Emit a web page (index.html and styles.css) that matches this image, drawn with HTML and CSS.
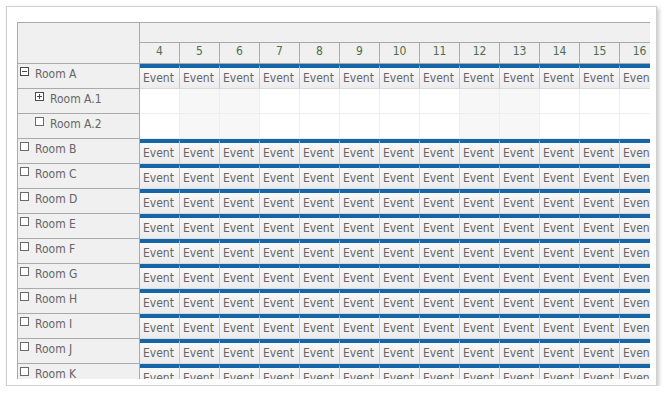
FILE: index.html
```html
<!DOCTYPE html>
<html lang="en">
<head>
    <meta charset="UTF-8">
    <title>Scheduler</title>
    <link rel="stylesheet" href="styles.css">
</head>
<body>
    <div class="frame">
        <div class="scheduler">
            <div class="corner"></div>
            <div class="timeline">
                <div class="time-top"></div>
                <div class="days">
                    <div class="day">4</div><div class="day">5</div><div class="day">6</div><div class="day">7</div><div class="day">8</div><div class="day">9</div><div class="day">10</div><div class="day">11</div><div class="day">12</div><div class="day">13</div><div class="day">14</div><div class="day">15</div><div class="day">16</div>
                </div>
            </div>

            <div class="rowhead"><svg class="tree" width="9" height="9"><rect x="0.5" y="0.5" width="8" height="8"/><path d="M2 4.5h5"/></svg>Room A</div>
            <div class="lane"><div class="event">Event</div><div class="event">Event</div><div class="event">Event</div><div class="event">Event</div><div class="event">Event</div><div class="event">Event</div><div class="event">Event</div><div class="event">Event</div><div class="event">Event</div><div class="event">Event</div><div class="event">Event</div><div class="event">Event</div><div class="event">Event</div></div>

            <div class="rowhead child"><svg class="tree" width="9" height="9"><rect x="0.5" y="0.5" width="8" height="8"/><path d="M2 4.5h5M4.5 2v5"/></svg>Room A.1</div>
            <div class="lane empty"><div class="cell"></div><div class="cell off"></div><div class="cell off"></div><div class="cell"></div><div class="cell"></div><div class="cell"></div><div class="cell"></div><div class="cell"></div><div class="cell off"></div><div class="cell off"></div><div class="cell"></div><div class="cell"></div><div class="cell"></div></div>

            <div class="rowhead child"><svg class="tree leaf" width="9" height="9"><rect x="0.5" y="0.5" width="8" height="8"/></svg>Room A.2</div>
            <div class="lane empty"><div class="cell"></div><div class="cell off"></div><div class="cell off"></div><div class="cell"></div><div class="cell"></div><div class="cell"></div><div class="cell"></div><div class="cell"></div><div class="cell off"></div><div class="cell off"></div><div class="cell"></div><div class="cell"></div><div class="cell"></div></div>

            <div class="rowhead"><svg class="tree leaf" width="9" height="9"><rect x="0.5" y="0.5" width="8" height="8"/></svg>Room B</div>
            <div class="lane"><div class="event">Event</div><div class="event">Event</div><div class="event">Event</div><div class="event">Event</div><div class="event">Event</div><div class="event">Event</div><div class="event">Event</div><div class="event">Event</div><div class="event">Event</div><div class="event">Event</div><div class="event">Event</div><div class="event">Event</div><div class="event">Event</div></div>

            <div class="rowhead"><svg class="tree leaf" width="9" height="9"><rect x="0.5" y="0.5" width="8" height="8"/></svg>Room C</div>
            <div class="lane"><div class="event">Event</div><div class="event">Event</div><div class="event">Event</div><div class="event">Event</div><div class="event">Event</div><div class="event">Event</div><div class="event">Event</div><div class="event">Event</div><div class="event">Event</div><div class="event">Event</div><div class="event">Event</div><div class="event">Event</div><div class="event">Event</div></div>

            <div class="rowhead"><svg class="tree leaf" width="9" height="9"><rect x="0.5" y="0.5" width="8" height="8"/></svg>Room D</div>
            <div class="lane"><div class="event">Event</div><div class="event">Event</div><div class="event">Event</div><div class="event">Event</div><div class="event">Event</div><div class="event">Event</div><div class="event">Event</div><div class="event">Event</div><div class="event">Event</div><div class="event">Event</div><div class="event">Event</div><div class="event">Event</div><div class="event">Event</div></div>

            <div class="rowhead"><svg class="tree leaf" width="9" height="9"><rect x="0.5" y="0.5" width="8" height="8"/></svg>Room E</div>
            <div class="lane"><div class="event">Event</div><div class="event">Event</div><div class="event">Event</div><div class="event">Event</div><div class="event">Event</div><div class="event">Event</div><div class="event">Event</div><div class="event">Event</div><div class="event">Event</div><div class="event">Event</div><div class="event">Event</div><div class="event">Event</div><div class="event">Event</div></div>

            <div class="rowhead"><svg class="tree leaf" width="9" height="9"><rect x="0.5" y="0.5" width="8" height="8"/></svg>Room F</div>
            <div class="lane"><div class="event">Event</div><div class="event">Event</div><div class="event">Event</div><div class="event">Event</div><div class="event">Event</div><div class="event">Event</div><div class="event">Event</div><div class="event">Event</div><div class="event">Event</div><div class="event">Event</div><div class="event">Event</div><div class="event">Event</div><div class="event">Event</div></div>

            <div class="rowhead"><svg class="tree leaf" width="9" height="9"><rect x="0.5" y="0.5" width="8" height="8"/></svg>Room G</div>
            <div class="lane"><div class="event">Event</div><div class="event">Event</div><div class="event">Event</div><div class="event">Event</div><div class="event">Event</div><div class="event">Event</div><div class="event">Event</div><div class="event">Event</div><div class="event">Event</div><div class="event">Event</div><div class="event">Event</div><div class="event">Event</div><div class="event">Event</div></div>

            <div class="rowhead"><svg class="tree leaf" width="9" height="9"><rect x="0.5" y="0.5" width="8" height="8"/></svg>Room H</div>
            <div class="lane"><div class="event">Event</div><div class="event">Event</div><div class="event">Event</div><div class="event">Event</div><div class="event">Event</div><div class="event">Event</div><div class="event">Event</div><div class="event">Event</div><div class="event">Event</div><div class="event">Event</div><div class="event">Event</div><div class="event">Event</div><div class="event">Event</div></div>

            <div class="rowhead"><svg class="tree leaf" width="9" height="9"><rect x="0.5" y="0.5" width="8" height="8"/></svg>Room I</div>
            <div class="lane"><div class="event">Event</div><div class="event">Event</div><div class="event">Event</div><div class="event">Event</div><div class="event">Event</div><div class="event">Event</div><div class="event">Event</div><div class="event">Event</div><div class="event">Event</div><div class="event">Event</div><div class="event">Event</div><div class="event">Event</div><div class="event">Event</div></div>

            <div class="rowhead"><svg class="tree leaf" width="9" height="9"><rect x="0.5" y="0.5" width="8" height="8"/></svg>Room J</div>
            <div class="lane"><div class="event">Event</div><div class="event">Event</div><div class="event">Event</div><div class="event">Event</div><div class="event">Event</div><div class="event">Event</div><div class="event">Event</div><div class="event">Event</div><div class="event">Event</div><div class="event">Event</div><div class="event">Event</div><div class="event">Event</div><div class="event">Event</div></div>

            <div class="rowhead"><svg class="tree leaf" width="9" height="9"><rect x="0.5" y="0.5" width="8" height="8"/></svg>Room K</div>
            <div class="lane"><div class="event">Event</div><div class="event">Event</div><div class="event">Event</div><div class="event">Event</div><div class="event">Event</div><div class="event">Event</div><div class="event">Event</div><div class="event">Event</div><div class="event">Event</div><div class="event">Event</div><div class="event">Event</div><div class="event">Event</div><div class="event">Event</div></div>
        </div>
    </div>
</body>
</html>
```

FILE: styles.css
```css
body {
    margin: 0;
    background: #fff;
    font-family: "DejaVu Sans Condensed", "DejaVu Sans", sans-serif;
    font-size: 12px;
    color: #666;
}
.frame {
    margin: 6px 0 0 6px;
    width: 651px;
    height: 380px;
    box-sizing: border-box;
    padding: 15px 0 0 10px;
    background: #fff;
    border: 1px solid #cfcfcf;
    box-shadow: 2px 2px 4px rgba(0, 0, 0, 0.22);
}
.scheduler {
    display: grid;
    grid-template-columns: 122px minmax(0, 1fr);
    grid-auto-rows: 25px;
    width: 633px;
    height: 357px;
    box-sizing: border-box;
    overflow: hidden;
    border-left: 1px solid #aaa;
    border-top: 1px solid #aaa;
}
.corner {
    grid-row: span 1;
    height: 41px;
    box-sizing: border-box;
    background: #f0f0f0;
    border-right: 1px solid #aaa;
    border-bottom: 1px solid #aaa;
}
.timeline {
    height: 41px;
    overflow: hidden;
    background: #f0f0f0;
}
.scheduler > .corner, .scheduler > .timeline {
    align-self: start;
}
.scheduler {
    grid-template-rows: 41px;
}
.time-top {
    height: 20px;
    box-sizing: border-box;
    border-bottom: 1px solid #aaa;
}
.days {
    display: flex;
    height: 21px;
    box-sizing: border-box;
    border-bottom: 1px solid #aaa;
}
.day {
    flex: none;
    width: 40px;
    box-sizing: border-box;
    border-right: 1px solid #aaa;
    text-align: center;
    line-height: 16px;
    color: #4e6e4e;
}
.rowhead {
    display: flex;
    align-items: flex-start;
    gap: 6px;
    box-sizing: border-box;
    padding: 3px 0 0 2px;
    line-height: 14px;
    white-space: nowrap;
    background: #f0f0f0;
    border-right: 1px solid #aaa;
    border-bottom: 1px solid #aaa;
}
.rowhead.child {
    padding-left: 17px;
}
.tree {
    display: block;
    flex: none;
    fill: #fff;
    stroke: #4a4a4a;
    stroke-width: 1;
}
.tree.leaf {
    stroke: #6a6a6a;
}
.lane {
    display: flex;
    overflow: hidden;
    box-sizing: border-box;
    border-bottom: 1px solid #d9d9d9;
}
.lane.empty {
    border-bottom-color: #eee;
}
.cell {
    flex: none;
    width: 40px;
    box-sizing: border-box;
    border-right: 1px solid #eee;
    background: #fff;
}
.cell.off {
    background: #f7f7f7;
}
.event {
    flex: none;
    width: 40px;
    box-sizing: border-box;
    padding-left: 3px;
    overflow: hidden;
    white-space: nowrap;
    line-height: 20px;
    color: #666;
    background: linear-gradient(#f8f8f8, #ececec);
    border-top: 4px solid #1565a7;
    border-right: 1px solid #c6c6c6;
}
```
